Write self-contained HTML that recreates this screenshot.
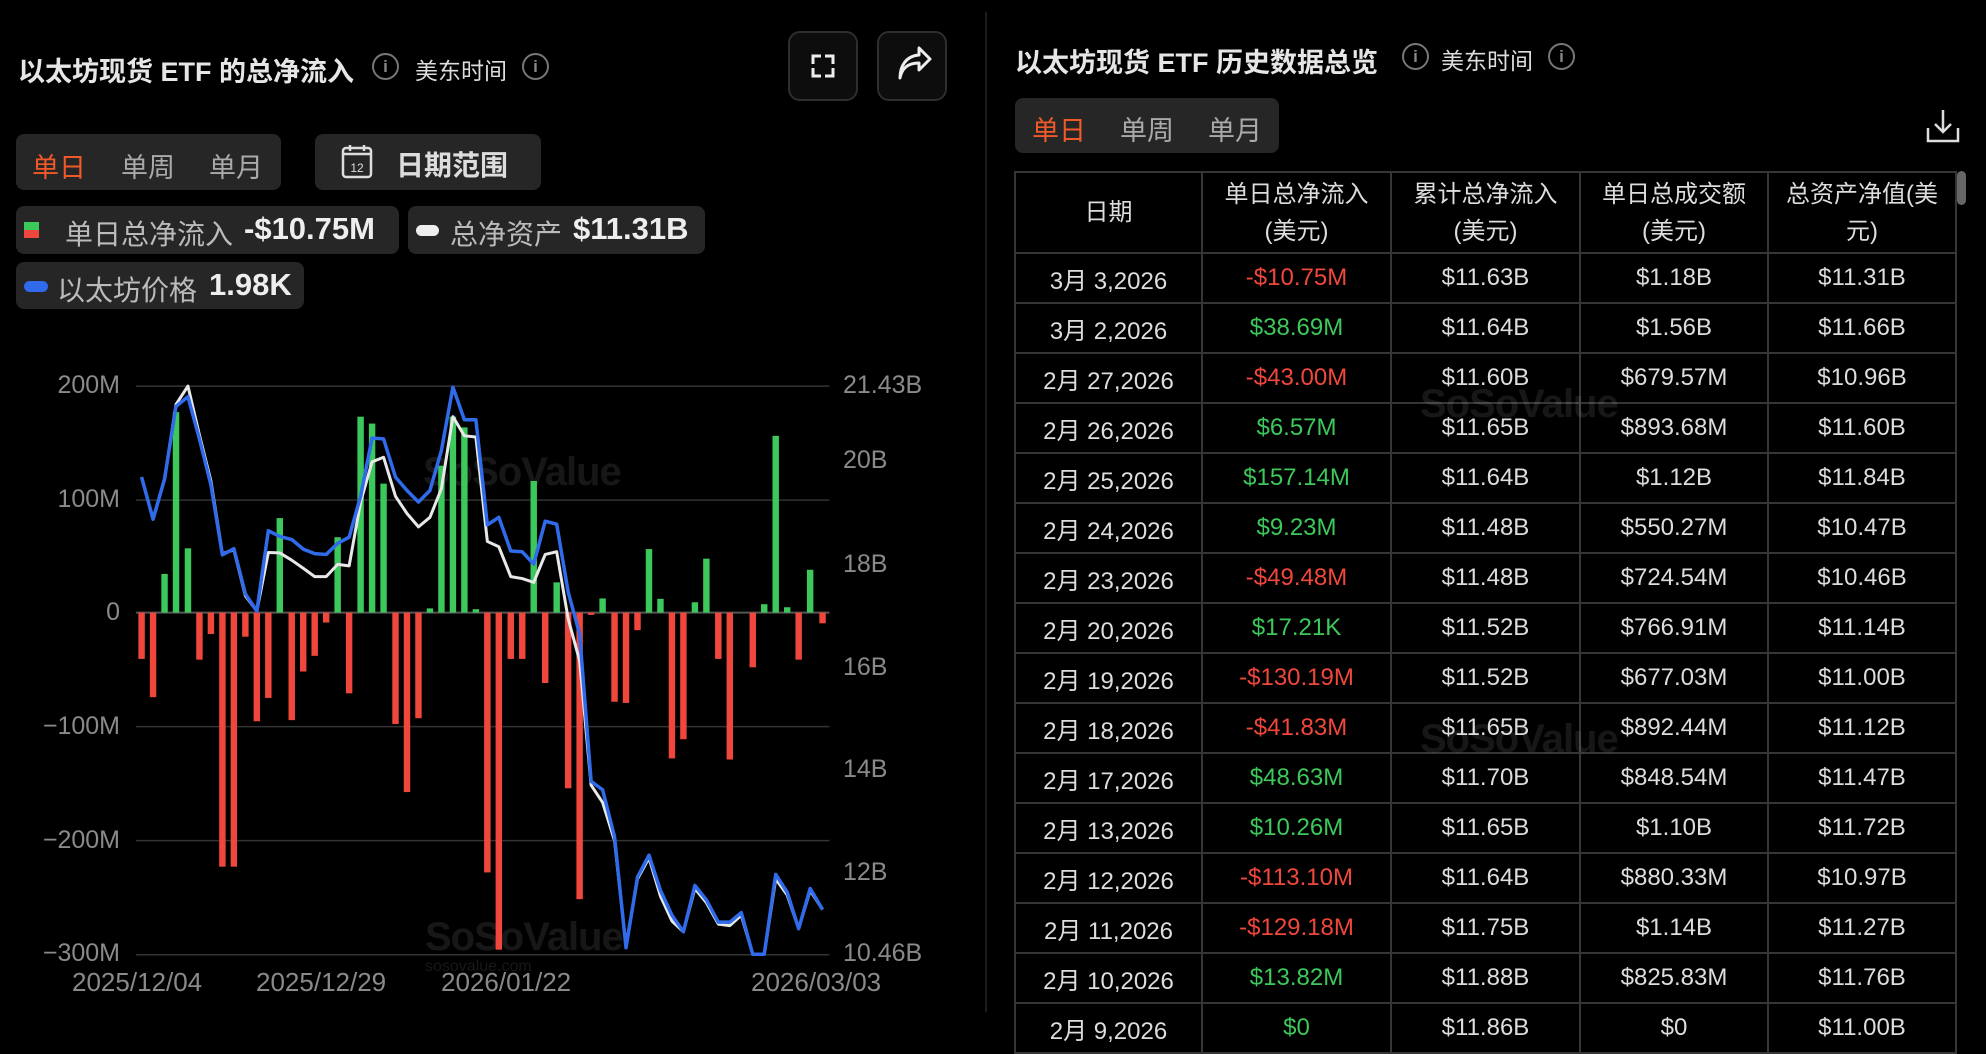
<!DOCTYPE html>
<html><head><meta charset="utf-8"><style>
*{margin:0;padding:0;box-sizing:border-box}
body{width:1986px;height:1012px;background:#000;overflow:hidden;position:relative;font-family:"Liberation Sans","Noto Sans CJK SC",sans-serif;color:#ddd}
.a{position:absolute;white-space:nowrap}
.title{font-size:27px;font-weight:bold;color:#e6e6e6}
.info{width:27px;height:27px;border:2px solid #777;border-radius:50%;color:#888;font-size:17px;text-align:center;line-height:23px;font-weight:bold}
.sub{font-size:23px;color:#ddd}
.box{background:#262626;border-radius:8px}
.btn{border:2px solid #2e2e2e;background:#0d0d0d;border-radius:12px}
.tab{font-size:27px;color:#aaa}
.on{color:#f0592a}
.lg{font-size:28px;color:#bbb}
.lv{font-size:31px;color:#eee;font-weight:bold}
.ax{font-size:25px;color:#8a8a8a}
.wm{font-size:40px;font-weight:bold;color:rgba(255,255,255,0.09);letter-spacing:-1px}
.wm2{font-size:16px;color:rgba(255,255,255,0.09)}
table{position:absolute;left:1014px;top:171px;border-collapse:collapse;width:941px;table-layout:fixed}
td,th{border:2px solid #363636;text-align:center;font-size:24px;font-weight:normal;color:#ddd;height:50px}
th{height:81px;line-height:37px;padding:0 4px}
.r{color:#f0473c}.g{color:#3cc85a}
</style></head><body>
<!-- LEFT -->
<div class="a title" style="left:18px;top:50px">以太坊现货 ETF 的总净流入</div>
<div class="a info" style="left:372px;top:53px">i</div>
<div class="a sub" style="left:415px;top:52px">美东时间</div>
<div class="a info" style="left:522px;top:53px">i</div>
<div class="a btn" style="left:788px;top:31px;width:70px;height:70px">
<svg width="66" height="66" viewBox="0 0 66 66"><path d="M23 31v-8h8M35 23h8v8M43 35v8h-8M31 43h-8v-8" fill="none" stroke="#eee" stroke-width="3"/></svg></div>
<div class="a btn" style="left:877px;top:31px;width:70px;height:70px">
<svg width="66" height="66" viewBox="0 0 66 66"><path d="M21 45c2-10 8-15 19-15v7l11-11-11-11v7c-13 1-19 11-19 23z" fill="none" stroke="#eee" stroke-width="3" stroke-linejoin="round"/></svg></div>
<div class="a box" style="left:16px;top:134px;width:265px;height:56px"></div>
<div class="a tab on" style="left:32px;top:146px">单日</div>
<div class="a tab" style="left:121px;top:146px">单周</div>
<div class="a tab" style="left:209px;top:146px">单月</div>
<div class="a box" style="left:315px;top:134px;width:226px;height:56px"></div>
<svg class="a" style="left:340px;top:143px" width="34" height="36" viewBox="0 0 34 36"><rect x="3" y="5" width="28" height="29" rx="3" fill="none" stroke="#ddd" stroke-width="2.5"/><path d="M3 11h28M10 2v6M24 2v6" stroke="#ddd" stroke-width="2.5"/><text x="17" y="29" font-size="12" fill="#ddd" text-anchor="middle" font-family="Liberation Sans">12</text></svg>
<div class="a" style="left:396px;top:144px;font-size:28px;font-weight:bold;color:#ddd">日期范围</div>
<div class="a box" style="left:16px;top:206px;width:383px;height:48px"></div>
<div class="a" style="left:24px;top:222px;width:15px;height:8px;background:#3cc85a"></div>
<div class="a" style="left:24px;top:230px;width:15px;height:8px;background:#f0473c"></div>
<div class="a lg" style="left:65px;top:213px">单日总净流入</div>
<div class="a lv" style="left:244px;top:211px">-$10.75M</div>
<div class="a box" style="left:408px;top:206px;width:297px;height:48px"></div>
<div class="a" style="left:416px;top:225px;width:23px;height:11px;background:#eee;border-radius:6px"></div>
<div class="a lg" style="left:450px;top:213px">总净资产</div>
<div class="a lv" style="left:573px;top:211px">$11.31B</div>
<div class="a box" style="left:16px;top:262px;width:288px;height:47px"></div>
<div class="a" style="left:24px;top:281px;width:24px;height:11px;background:#2f6bea;border-radius:6px"></div>
<div class="a lg" style="left:57px;top:269px">以太坊价格</div>
<div class="a lv" style="left:209px;top:267px">1.98K</div>
<!-- axes -->
<div class="a ax" style="right:1866px;top:371px">200M</div>
<div class="a ax" style="right:1866px;top:485px">100M</div>
<div class="a ax" style="right:1866px;top:598px">0</div>
<div class="a ax" style="right:1866px;top:712px">−100M</div>
<div class="a ax" style="right:1866px;top:826px">−200M</div>
<div class="a ax" style="right:1866px;top:939px">−300M</div>
<div class="a ax" style="left:843px;top:371px">21.43B</div>
<div class="a ax" style="left:843px;top:446px">20B</div>
<div class="a ax" style="left:843px;top:550px">18B</div>
<div class="a ax" style="left:843px;top:653px">16B</div>
<div class="a ax" style="left:843px;top:755px">14B</div>
<div class="a ax" style="left:843px;top:858px">12B</div>
<div class="a ax" style="left:843px;top:939px">10.46B</div>
<div class="a ax" style="left:72px;top:967px;font-size:26px">2025/12/04</div>
<div class="a ax" style="left:256px;top:967px;font-size:26px">2025/12/29</div>
<div class="a ax" style="left:441px;top:967px;font-size:26px">2026/01/22</div>
<div class="a ax" style="left:751px;top:967px;font-size:26px">2026/03/03</div>
<div class="a wm" style="left:423px;top:450px">SoSoValue</div>
<div class="a wm" style="left:425px;top:915px">SoSoValue</div>
<div class="a wm2" style="left:425px;top:958px">sosovalue.com</div>
<svg class="a" style="left:120px;top:370px" width="720" height="600" viewBox="0 0 1568 1568" preserveAspectRatio="none">
<path d="M35 42H1545M35 340H1545M35 932H1545M35 1230H1545M35 1528H1545" stroke="#333" stroke-width="1.5" vector-effect="non-scaling-stroke"/>
<path d="M35 634H1545" stroke="#555" stroke-width="2" vector-effect="non-scaling-stroke"/>
<g fill="#f0473c">
<rect x="40" y="634" width="14" height="121"/><rect x="65" y="634" width="14" height="221"/>
<rect x="166" y="634" width="14" height="123"/><rect x="191" y="634" width="14" height="56"/>
<rect x="216" y="634" width="14" height="664"/><rect x="241" y="634" width="14" height="664"/>
<rect x="266" y="634" width="14" height="63"/><rect x="291" y="634" width="14" height="284"/>
<rect x="316" y="634" width="14" height="223"/><rect x="367" y="634" width="14" height="281"/>
<rect x="392" y="634" width="14" height="154"/><rect x="417" y="634" width="14" height="113"/>
<rect x="442" y="634" width="14" height="26"/><rect x="492" y="634" width="14" height="211"/>
<rect x="593" y="634" width="14" height="291"/><rect x="618" y="634" width="14" height="469"/>
<rect x="643" y="634" width="14" height="276"/><rect x="793" y="634" width="14" height="679"/>
<rect x="818" y="634" width="14" height="881"/><rect x="844" y="634" width="14" height="121"/>
<rect x="869" y="634" width="14" height="121"/><rect x="919" y="634" width="14" height="184"/>
<rect x="969" y="634" width="14" height="459"/><rect x="994" y="634" width="14" height="749"/>
<rect x="1019" y="634" width="14" height="6"/><rect x="1070" y="634" width="14" height="233"/>
<rect x="1095" y="634" width="14" height="236"/><rect x="1120" y="634" width="14" height="46"/>
<rect x="1195" y="634" width="14" height="381"/><rect x="1220" y="634" width="14" height="331"/>
<rect x="1296" y="634" width="14" height="121"/><rect x="1321" y="634" width="14" height="384"/>
<rect x="1371" y="634" width="14" height="143"/><rect x="1471" y="634" width="14" height="123"/>
<rect x="1523" y="634" width="14" height="28"/>
</g>
<g fill="#3cc85a">
<rect x="90" y="533" width="14" height="101"/><rect x="115" y="110" width="14" height="524"/>
<rect x="141" y="466" width="14" height="168"/><rect x="341" y="387" width="14" height="247"/>
<rect x="467" y="437" width="14" height="197"/><rect x="517" y="122" width="14" height="512"/>
<rect x="542" y="140" width="14" height="494"/><rect x="567" y="297" width="14" height="337"/>
<rect x="668" y="623" width="14" height="11"/><rect x="693" y="250" width="14" height="384"/>
<rect x="718" y="122" width="14" height="512"/><rect x="743" y="150" width="14" height="484"/>
<rect x="768" y="625" width="14" height="9"/><rect x="894" y="290" width="14" height="344"/>
<rect x="944" y="555" width="14" height="79"/><rect x="1044" y="597" width="14" height="37"/>
<rect x="1145" y="468" width="14" height="166"/><rect x="1170" y="598" width="14" height="36"/>
<rect x="1245" y="607" width="14" height="27"/><rect x="1270" y="493" width="14" height="141"/>
<rect x="1396" y="612" width="14" height="22"/><rect x="1421" y="172" width="14" height="462"/>
<rect x="1446" y="620" width="14" height="14"/><rect x="1496" y="522" width="14" height="112"/>
</g>
<polyline fill="none" stroke="#e8e8e8" stroke-width="3" vector-effect="non-scaling-stroke" stroke-linejoin="round" points="47,280 72,390 97,285 122,90 148,42 173,170 198,290 223,480 248,470 273,590 298,630 323,477 348,478 374,497 399,518 424,540 449,540 474,508 499,512 524,345 549,240 574,228 600,330 625,375 650,410 675,385 700,310 725,122 750,172 775,175 800,448 825,462 851,540 876,545 901,555 926,482 951,475 976,650 1001,760 1026,1085 1051,1130 1077,1230 1102,1505 1127,1330 1152,1275 1177,1375 1202,1440 1227,1468 1252,1355 1277,1392 1303,1448 1328,1452 1353,1425 1378,1527 1403,1527 1428,1330 1453,1372 1478,1460 1503,1360 1530,1410"/>
<polyline fill="none" stroke="#2f6bea" stroke-width="3.5" vector-effect="non-scaling-stroke" stroke-linejoin="round" points="47,280 72,390 97,285 122,95 148,70 173,180 198,300 223,483 248,467 273,585 298,630 323,420 348,435 374,443 399,468 424,480 449,482 474,453 499,437 524,330 549,178 574,180 600,280 625,315 650,345 675,315 700,210 725,45 750,130 775,130 800,405 825,385 851,473 876,475 901,507 926,395 951,403 976,580 1001,690 1026,1075 1051,1097 1077,1220 1102,1510 1127,1325 1152,1268 1177,1360 1202,1425 1227,1468 1252,1347 1277,1385 1303,1443 1328,1443 1353,1418 1378,1527 1403,1527 1428,1318 1453,1365 1478,1460 1503,1355 1530,1410"/>
</svg>
<div class="a" style="left:985px;top:12px;width:2px;height:1000px;background:#1c1c1c"></div>
<!-- RIGHT -->
<div class="a title" style="left:1015px;top:41px">以太坊现货 ETF 历史数据总览</div>
<div class="a info" style="left:1402px;top:43px">i</div>
<div class="a sub" style="left:1441px;top:42px">美东时间</div>
<div class="a info" style="left:1548px;top:43px">i</div>
<div class="a box" style="left:1015px;top:98px;width:264px;height:55px"></div>
<div class="a tab on" style="left:1032px;top:109px">单日</div>
<div class="a tab" style="left:1120px;top:109px">单周</div>
<div class="a tab" style="left:1208px;top:109px">单月</div>
<svg class="a" style="left:1925px;top:108px" width="36" height="36" viewBox="0 0 36 36"><path d="M18 2v22M10 16l8 8 8-8M3 20v13h30V20" fill="none" stroke="#ddd" stroke-width="2.5"/></svg>
<div class="a" style="left:1957px;top:171px;width:9px;height:34px;background:#666;border-radius:5px"></div>
<table>
<colgroup><col style="width:187px"><col style="width:189px"><col style="width:189px"><col style="width:188px"><col style="width:188px"></colgroup>
<tr><th>日期</th><th>单日总净流入<br>(美元)</th><th>累计总净流入<br>(美元)</th><th>单日总成交额<br>(美元)</th><th>总资产净值(美<br>元)</th></tr>
<tr><td>3月 3,2026</td><td class="r">-$10.75M</td><td>$11.63B</td><td>$1.18B</td><td>$11.31B</td></tr>
<tr><td>3月 2,2026</td><td class="g">$38.69M</td><td>$11.64B</td><td>$1.56B</td><td>$11.66B</td></tr>
<tr><td>2月 27,2026</td><td class="r">-$43.00M</td><td>$11.60B</td><td>$679.57M</td><td>$10.96B</td></tr>
<tr><td>2月 26,2026</td><td class="g">$6.57M</td><td>$11.65B</td><td>$893.68M</td><td>$11.60B</td></tr>
<tr><td>2月 25,2026</td><td class="g">$157.14M</td><td>$11.64B</td><td>$1.12B</td><td>$11.84B</td></tr>
<tr><td>2月 24,2026</td><td class="g">$9.23M</td><td>$11.48B</td><td>$550.27M</td><td>$10.47B</td></tr>
<tr><td>2月 23,2026</td><td class="r">-$49.48M</td><td>$11.48B</td><td>$724.54M</td><td>$10.46B</td></tr>
<tr><td>2月 20,2026</td><td class="g">$17.21K</td><td>$11.52B</td><td>$766.91M</td><td>$11.14B</td></tr>
<tr><td>2月 19,2026</td><td class="r">-$130.19M</td><td>$11.52B</td><td>$677.03M</td><td>$11.00B</td></tr>
<tr><td>2月 18,2026</td><td class="r">-$41.83M</td><td>$11.65B</td><td>$892.44M</td><td>$11.12B</td></tr>
<tr><td>2月 17,2026</td><td class="g">$48.63M</td><td>$11.70B</td><td>$848.54M</td><td>$11.47B</td></tr>
<tr><td>2月 13,2026</td><td class="g">$10.26M</td><td>$11.65B</td><td>$1.10B</td><td>$11.72B</td></tr>
<tr><td>2月 12,2026</td><td class="r">-$113.10M</td><td>$11.64B</td><td>$880.33M</td><td>$10.97B</td></tr>
<tr><td>2月 11,2026</td><td class="r">-$129.18M</td><td>$11.75B</td><td>$1.14B</td><td>$11.27B</td></tr>
<tr><td>2月 10,2026</td><td class="g">$13.82M</td><td>$11.88B</td><td>$825.83M</td><td>$11.76B</td></tr>
<tr><td>2月 9,2026</td><td class="g">$0</td><td>$11.86B</td><td>$0</td><td>$11.00B</td></tr>
</table>
<div class="a wm" style="left:1420px;top:382px">SoSoValue</div>
<div class="a wm" style="left:1420px;top:717px">SoSoValue</div>
</body></html>
